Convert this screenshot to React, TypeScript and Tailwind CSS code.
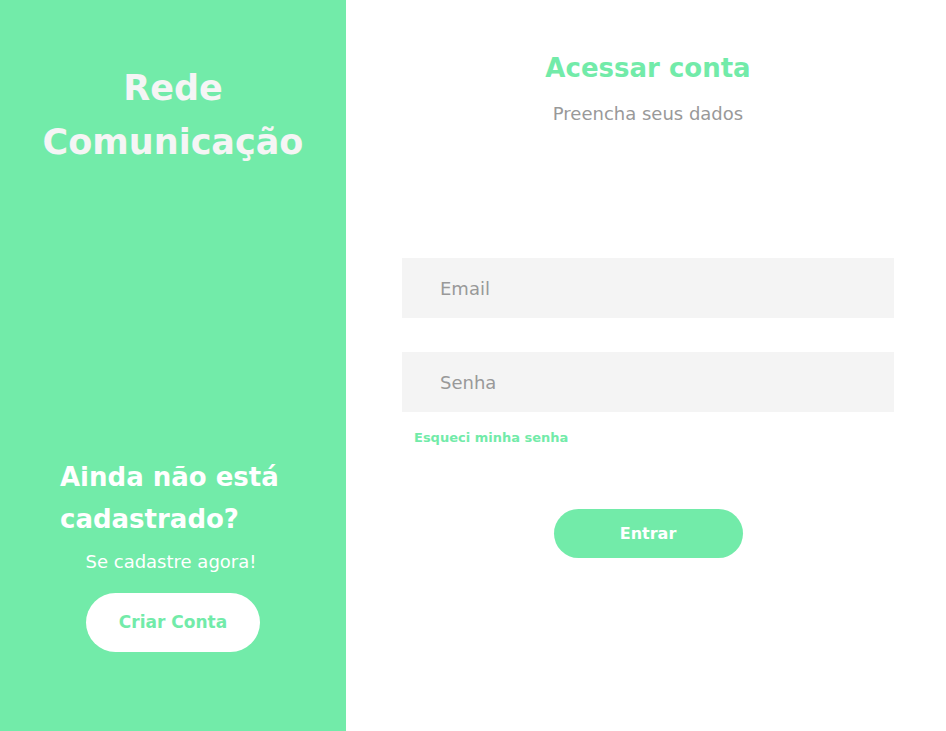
import React from 'react';

const green = '#72eba9';

const App: React.FC = () => {
  return (
    <div
      className="flex h-[731px] w-[946px] overflow-hidden bg-white"
      style={{ fontFamily: '"DejaVu Sans", sans-serif' }}
    >
      {/* painel lateral */}
      <aside className="flex w-[346px] shrink-0 flex-col items-center bg-[#72eba9] pt-[61px]">
        <h1 className="text-center text-[35px] font-bold leading-[54px] text-[#f5f5f5]">
          Rede
          <br />
          Comunicação
        </h1>

        <div className="mt-[287px] flex w-full flex-col items-center">
          <h2 className="w-full px-[60px] text-left text-[26px] font-bold leading-[42px] text-white">
            Ainda não está cadastrado?
          </h2>
          <p className="mt-[8px] pr-[4px] text-[18px] leading-[27px] text-white">Se cadastre agora!</p>
          <button className="mt-[18px] h-[59px] w-[174px] rounded-full bg-white text-[17px] font-bold text-[#72eba9]">
            Criar Conta
          </button>
        </div>
      </aside>

      {/* formulario */}
      <main className="flex flex-1 flex-col items-center pl-[4px] pt-[50px]">
        <h2 className="text-[26px] font-bold leading-[36px] text-[#72eba9]">Acessar conta</h2>
        <p className="mt-[14px] text-[18px] leading-[27px] text-[#999999]">Preencha seus dados</p>

        <form className="mt-[131px] flex w-[492px] flex-col">
          <input
            type="email"
            placeholder="Email"
            className="h-[60px] w-full bg-[#f4f4f4] pl-[38px] text-[18px] text-gray-600 outline-none placeholder:text-[#999999]"
          />
          <input
            type="password"
            placeholder="Senha"
            className="mt-[34px] h-[60px] w-full bg-[#f4f4f4] pl-[38px] text-[18px] text-gray-600 outline-none placeholder:text-[#999999]"
          />
          <a href="#" className="ml-[12px] mt-[18px] text-[13px] font-bold leading-[16px] text-[#72eba9]">
            Esqueci minha senha
          </a>
          <button
            type="button"
            style={{ backgroundColor: green }}
            className="mx-auto mt-[63px] h-[49px] w-[189px] rounded-full text-[16px] font-bold text-white"
          >
            Entrar
          </button>
        </form>
      </main>
    </div>
  );
};

export default App;
